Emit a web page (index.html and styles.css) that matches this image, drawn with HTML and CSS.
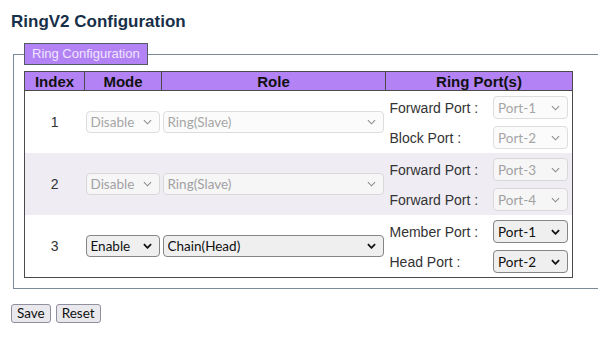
FILE: index.html
```html
<!DOCTYPE html>
<html>
<head>
<meta charset="utf-8">
<title>RingV2 Configuration</title>
<link rel="stylesheet" href="styles.css">
</head>
<body>
<h1 class="title">RingV2 Configuration</h1>
<fieldset class="box">
  <legend class="box-legend">Ring Configuration</legend>
  <table class="ring">
    <colgroup><col class="c-idx"><col class="c-mode"><col class="c-role"><col class="c-port"></colgroup>
    <thead>
      <tr><th>Index</th><th>Mode</th><th>Role</th><th>Ring Port(s)</th></tr>
    </thead>
    <tbody>
      <tr>
        <td class="idx">1</td>
        <td class="mode"><span class="sel dis w-mode"><select disabled><option>Disable</option></select><svg class="chev" viewBox="0 0 10 6"><path d="M1 1L5 5L9 1"/></svg></span></td>
        <td class="role"><span class="sel dis w-role"><select disabled><option>Ring(Slave)</option></select><svg class="chev" viewBox="0 0 10 6"><path d="M1 1L5 5L9 1"/></svg></span></td>
        <td class="port">
          <div class="ports">
            <div class="pline"><span class="plabel">Forward Port :</span><span class="sel dis w-port"><select disabled><option>Port-1</option></select><svg class="chev" viewBox="0 0 10 6"><path d="M1 1L5 5L9 1"/></svg></span></div>
            <div class="pline"><span class="plabel">Block Port :</span><span class="sel dis w-port"><select disabled><option>Port-2</option></select><svg class="chev" viewBox="0 0 10 6"><path d="M1 1L5 5L9 1"/></svg></span></div>
          </div>
        </td>
      </tr>
      <tr class="alt">
        <td class="idx">2</td>
        <td class="mode"><span class="sel dis w-mode"><select disabled><option>Disable</option></select><svg class="chev" viewBox="0 0 10 6"><path d="M1 1L5 5L9 1"/></svg></span></td>
        <td class="role"><span class="sel dis w-role"><select disabled><option>Ring(Slave)</option></select><svg class="chev" viewBox="0 0 10 6"><path d="M1 1L5 5L9 1"/></svg></span></td>
        <td class="port">
          <div class="ports">
            <div class="pline"><span class="plabel">Forward Port :</span><span class="sel dis w-port"><select disabled><option>Port-3</option></select><svg class="chev" viewBox="0 0 10 6"><path d="M1 1L5 5L9 1"/></svg></span></div>
            <div class="pline"><span class="plabel">Forward Port :</span><span class="sel dis w-port"><select disabled><option>Port-4</option></select><svg class="chev" viewBox="0 0 10 6"><path d="M1 1L5 5L9 1"/></svg></span></div>
          </div>
        </td>
      </tr>
      <tr>
        <td class="idx">3</td>
        <td class="mode"><span class="sel w-mode"><select><option>Enable</option></select><svg class="chev" viewBox="0 0 10 6"><path d="M1 1L5 5L9 1"/></svg></span></td>
        <td class="role"><span class="sel w-role"><select><option>Chain(Head)</option></select><svg class="chev" viewBox="0 0 10 6"><path d="M1 1L5 5L9 1"/></svg></span></td>
        <td class="port">
          <div class="ports">
            <div class="pline"><span class="plabel">Member Port :</span><span class="sel w-port"><select><option>Port-1</option></select><svg class="chev" viewBox="0 0 10 6"><path d="M1 1L5 5L9 1"/></svg></span></div>
            <div class="pline"><span class="plabel">Head Port :</span><span class="sel w-port"><select><option>Port-2</option></select><svg class="chev" viewBox="0 0 10 6"><path d="M1 1L5 5L9 1"/></svg></span></div>
          </div>
        </td>
      </tr>
    </tbody>
  </table>
</fieldset>
<div class="actions">
  <button class="btn" type="button">Save</button>
  <button class="btn" type="button">Reset</button>
</div>
</body>
</html>
```

FILE: styles.css
```css
html, body {
  margin: 0;
  padding: 0;
  background: #ffffff;
}

body {
  font-family: "Liberation Sans", Arial, sans-serif;
  color: #222;
}

.title {
  margin: 12px 0 0 11px;
  font-size: 17px;
  line-height: 20px;
  font-weight: bold;
  color: #172f48;
}

.box {
  box-sizing: border-box;
  width: 585px;
  margin: 11px 0 0 13px;
  padding: 6px 10px 10px 10px;
  border: 1px solid #7b8a99;
  border-right: none;
}

.box-legend {
  padding: 0 7px;
  height: 22px;
  box-sizing: border-box;
  line-height: 20px;
  font-size: 13px;
  color: #efe6ff;
  background: #b383f6;
  border: 1px solid #555b66;
}

.ring {
  width: 548px;
  border-collapse: collapse;
  border: 1px solid #4a4a4a;
  table-layout: fixed;
}

.c-idx { width: 60px; }
.c-mode { width: 77px; }
.c-role { width: 224px; }
.c-port { width: 187px; }

.ring th {
  background: #b383f6;
  border: 1px solid #4a4a4a;
  font-size: 15px;
  font-weight: bold;
  color: #111;
  height: 18px;
  line-height: 17px;
  padding: 0;
  text-align: center;
}

.ring td {
  padding: 0;
  vertical-align: middle;
}

.ring tr.alt td {
  background: #efedf3;
}

.idx {
  text-align: center;
  font-size: 14px;
  color: #333;
}

.ring td.mode,
.ring td.role {
  padding-left: 1px;
}

.ports {
  display: flex;
  flex-direction: column;
  gap: 7px;
  padding: 5px 4px 4px 4px;
}

.pline {
  display: flex;
  align-items: center;
  justify-content: space-between;
  height: 23px;
}

.plabel {
  font-size: 14px;
  color: #333;
}

.sel {
  position: relative;
  display: inline-flex;
  vertical-align: middle;
}

.sel select {
  appearance: none;
  -webkit-appearance: none;
  box-sizing: border-box;
  width: 100%;
  height: 22px;
  margin: 0;
  padding: 0 0 0 4px;
  font-family: Lato, "Noto Sans", sans-serif;
  font-size: 13.5px;
  color: #111;
  background: #efefef;
  border: 1px solid #858585;
  border-radius: 4px;
  outline: none;
}

.sel.dis select {
  color: #808080;
  background: #fafafa;
  border-color: #cfcfcf;
}

.w-mode { width: 74px; }
.w-role { width: 221px; }
.w-port { width: 75px; }
.w-port select { height: 23px; }

.chev {
  position: absolute;
  right: 8px;
  top: 50%;
  width: 9px;
  height: 6px;
  margin-top: -3px;
  fill: none;
  stroke: #111;
  stroke-width: 2;
  pointer-events: none;
}

.sel.dis .chev {
  stroke: #8a8a8a;
  stroke-width: 1.2;
}

.actions {
  display: flex;
  gap: 5px;
  margin: 15px 0 0 11px;
}

.btn {
  height: 19px;
  padding: 0 5px;
  font-family: Lato, "Noto Sans", sans-serif;
  font-size: 13.5px;
  line-height: 17px;
  color: #111;
  background: #e9e9ed;
  border: 1px solid #8f8f9d;
  border-radius: 3px;
}
```
